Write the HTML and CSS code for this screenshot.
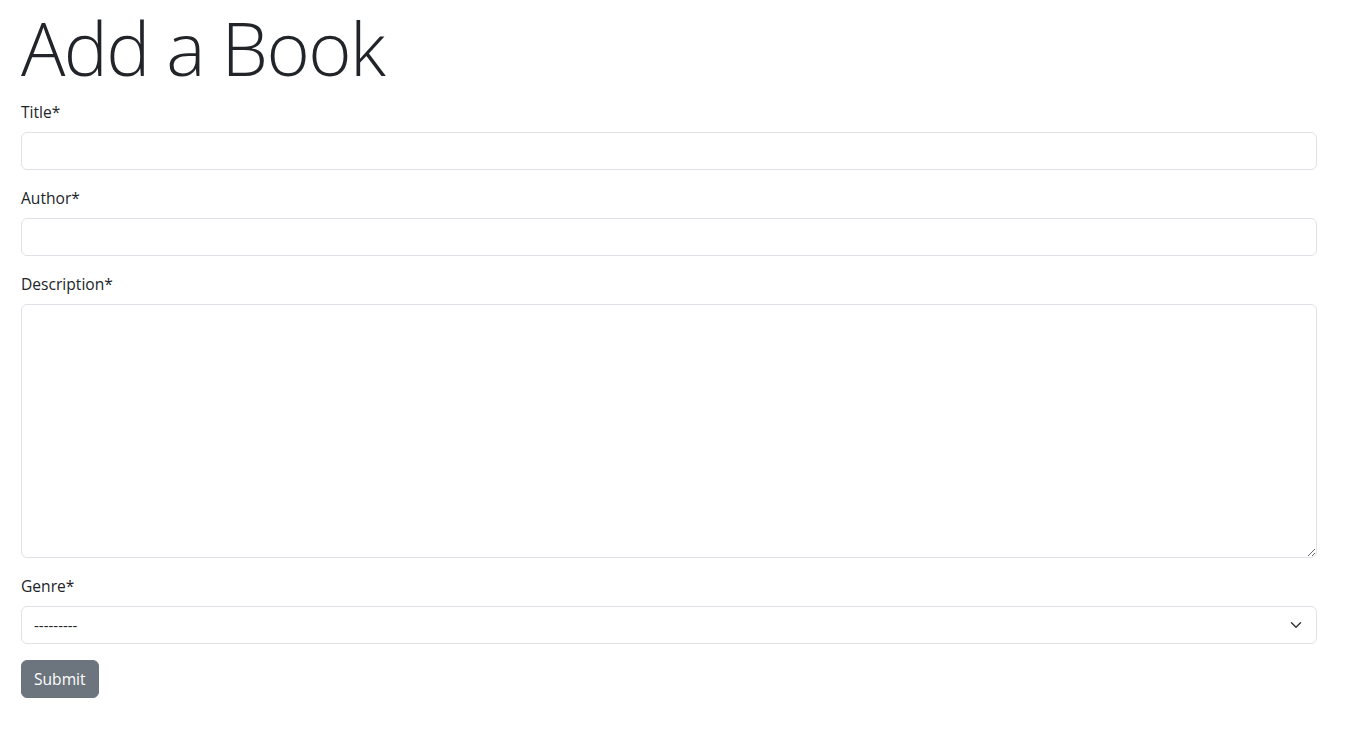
FILE: index.html
```html
<!DOCTYPE html>
<html lang="en">
<head>
<meta charset="utf-8">
<title>Add a Book</title>
<link rel="stylesheet" href="styles.css">
</head>
<body>
<main class="container">
  <h1 class="display">Add a Book</h1>
  <form class="book-form">
    <div class="field">
      <label class="form-label" for="title">Title*</label>
      <input class="form-control" id="title" type="text">
    </div>
    <div class="field">
      <label class="form-label" for="author">Author*</label>
      <input class="form-control" id="author" type="text">
    </div>
    <div class="field">
      <label class="form-label" for="desc">Description*</label>
      <textarea class="form-control textarea" id="desc"></textarea>
    </div>
    <div class="field">
      <label class="form-label" for="genre">Genre*</label>
      <select class="form-select" id="genre">
        <option>---------</option>
      </select>
    </div>
    <button class="btn" type="submit">Submit</button>
  </form>
</main>
</body>
</html>
```

FILE: styles.css
```css
* { box-sizing: border-box; }
html, body { margin: 0; padding: 0; background: #fff; }
body {
  font-family: "Open Sans", "Noto Sans", sans-serif;
  font-size: 16px;
  line-height: 1.5;
  color: #212529;
}
.container {
  width: 1296px;
  margin-left: 21px;
}
.display {
  font-size: 74px;
  font-weight: 300;
  letter-spacing: -1.6px;
  line-height: 96px;
  margin: 0 0 4px 0;
  white-space: nowrap;
}
.field { margin-bottom: 16px; }
.form-label {
  display: block;
  margin-bottom: 8px;
  line-height: 24px;
  font-size: 15.6px;
}
.form-control, .form-select {
  display: block;
  width: 100%;
  height: 38px;
  padding: 6px 12px;
  font-family: inherit;
  font-size: 16px;
  line-height: 24px;
  color: #212529;
  background: #fff;
  border: 1px solid #dee2e6;
  border-radius: 6px;
  outline: none;
}
.textarea {
  height: 254px;
  resize: vertical;
}
.form-select {
  appearance: none;
  -webkit-appearance: none;
  padding-right: 36px;
  font-size: 15px;
  background-image: url("data:image/svg+xml,%3csvg xmlns='http://www.w3.org/2000/svg' viewBox='0 0 16 16'%3e%3cpath fill='none' stroke='%23343a40' stroke-linecap='round' stroke-linejoin='round' stroke-width='2' d='m2 5 6 6 6-6'/%3e%3c/svg%3e");
  background-repeat: no-repeat;
  background-position: right 12px center;
  background-size: 16px 12px;
}
.btn {
  display: inline-block;
  height: 38px;
  padding: 6px 12px;
  font-family: inherit;
  font-size: 15.6px;
  line-height: 24px;
  color: #fff;
  background: #6c757d;
  border: 1px solid #6c757d;
  border-radius: 6px;
  cursor: pointer;
}
```
